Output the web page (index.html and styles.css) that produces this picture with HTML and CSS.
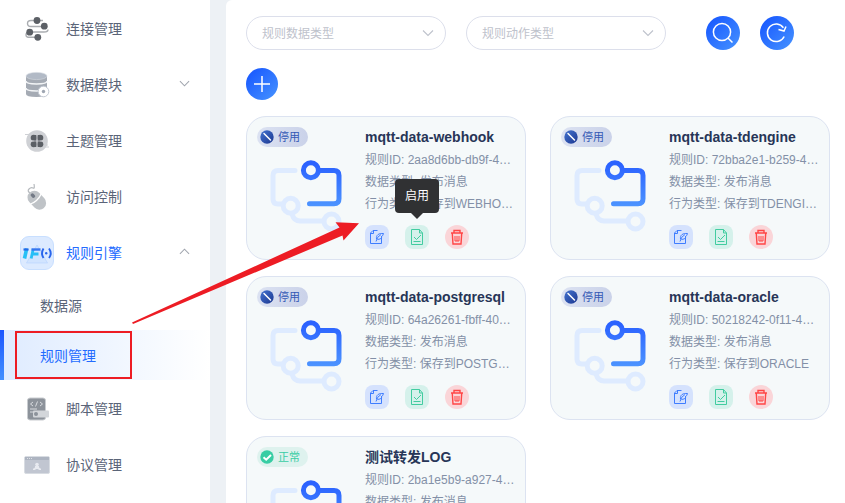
FILE: index.html
```
<!DOCTYPE html>
<html lang="zh-CN">
<head>
<meta charset="utf-8">
<title>规则管理</title>
<link rel="stylesheet" href="styles.css">
</head>
<body>
<svg class="defs" width="0" height="0">
  <defs>
    <linearGradient id="blue" x1="0" y1="0" x2="0" y2="80" gradientUnits="userSpaceOnUse"><stop offset=".1" stop-color="#2b62ff"/><stop offset=".65" stop-color="#4e96ff"/></linearGradient>
    <linearGradient id="navy" x1="0" y1="0" x2="1" y2="1"><stop offset="0" stop-color="#4474d0"/><stop offset="1" stop-color="#1c3790"/></linearGradient>
    <symbol id="flow" viewBox="0 0 80 80">
      <g fill="none" stroke-width="5" stroke-linecap="round">
        <path stroke="#deebff" d="M29 14.500H12q-5 0-5 5V43q0 5 5 5h4M26 58q2 7 8 7H57"/>
        <circle cx="24.700" cy="49.700" r="7.500" stroke="#deebff"/>
        <circle cx="65.500" cy="65.500" r="7.500" stroke="#deebff"/>
        <path stroke="url(#blue)" d="M53 14.500H68q5 0 5 5V42.700q0 5-5 5H43.500"/>
        <circle cx="44.900" cy="14.300" r="7.500" stroke="url(#blue)"/>
      </g>
    </symbol>
    <symbol id="stop" viewBox="0 0 14 14"><circle cx="7" cy="7" r="6.700" fill="url(#navy)"/><path d="M4 3.500 10.500 10" stroke="#fff" stroke-width="1.500" stroke-linecap="round"/></symbol>
    <symbol id="ok" viewBox="0 0 14 14"><circle cx="7" cy="7" r="6.700" fill="#38cda4"/><path d="m3.500 7.200 2.700 2.500L11 5" fill="none" stroke="#fff" stroke-width="2"/></symbol>
    <symbol id="edit" viewBox="0 0 24 24"><g fill="none" stroke="#3e7dff" stroke-width="1"><path d="M12.500 5.500H8L5.500 8v10.500h11v-6M8.500 5.500v3h-3M11 16.500q1-5 5-7M11.500 14c-.5-4 2-5.800 7-5.500q-.5 2.500-2.500 3.500h1q-1 2.500-4.500 2.500"/></g></symbol>
    <symbol id="enable" viewBox="0 0 24 24"><g fill="none" stroke="#42cca0"><path d="M6.500 4.500h8l3 3.500v11.500h-11zM14.500 4.500V8h3M9 12l2.500 2.500 4.500-4.500M8.500 16.500h7"/></g></symbol>
    <symbol id="trash" viewBox="0 0 24 24"><g fill="none" stroke="#ff4545" stroke-width="1.200"><path d="M6 8h12M9 7.500V5.500h6v2M7.300 8.500l.7 10.500h8l.7-10.500" stroke-width="1.400"/><path d="M10 11v5M12 11v5M14 11v5M10 16h4" stroke-width="1"/></g></symbol>
    <symbol id="down" viewBox="0 0 12 12"><path d="m1 3.500 5 5 5-5" fill="none" stroke="currentColor" stroke-width="1.100"/></symbol>
  </defs>
</svg>
<div class="app">
  <nav class="sidebar">
    <a class="item"><svg class="icon" viewBox="0 0 34 34"><path d="M23 8.500H11q-3.500 0-3.500 3T11 14.500h13M9.500 20H24q4 0 4-2.500M9 20.500q-3 0-3 2.500t4 2.300h7" fill="none" stroke="#aaadb1" stroke-width="1.400"/><g fill="#5c6066"><circle cx="17" cy="8.500" r="3.400"/><circle cx="24.300" cy="14.200" r="3.400"/><circle cx="9.700" cy="20.200" r="3.400"/><circle cx="17.800" cy="25.300" r="3.400"/></g></svg><span class="label">连接管理</span></a>
    <a class="item"><svg class="icon" viewBox="0 0 34 34"><path d="M6 8v18q0 3 10.500 3T27 26V8z" fill="#a5abb4"/><path d="M6 13q0 3 10.500 3T27 13M6 20q0 3 10.500 3T27 20" fill="none" stroke="#f2f4f6" stroke-width="1.500"/><ellipse cx="16.500" cy="8" rx="10.500" ry="3.600" fill="#b2bac6" stroke="#d5dae0" stroke-width=".6"/><circle cx="23.500" cy="23.500" r="5.300" fill="#fff" stroke="#c4cad4"/><circle cx="23.500" cy="23.500" r="1.700" fill="#9fa6b2"/></svg><span class="label">数据模块</span><svg class="caret"><use href="#down"/></svg></a>
    <a class="item"><svg class="icon" viewBox="0 0 34 34"><circle cx="17" cy="17" r="10.800" fill="#cfd1d5"/><path d="M5 10.500h8M7 13h5M22 21h6M23 23h6" stroke="#cfd1d5"/><g fill="#5b5f65"><path d="M14 11h2.500v12H14zM17.500 11H20v12h-2.500z"/><circle cx="13.700" cy="13.700" r="3"/><circle cx="20.300" cy="13.700" r="3"/><circle cx="13.700" cy="20.300" r="3"/><circle cx="20.300" cy="20.300" r="3"/></g><path d="M17 10v14M10 17h14" stroke="#cfd1d5" stroke-width=".8"/></svg><span class="label">主题管理</span></a>
    <a class="item"><svg class="icon" viewBox="0 0 34 34"><path d="M10 13q-3-2-1-4t4-1 1-4" fill="none" stroke="#b5b9bd" stroke-width="1.200"/><g transform="rotate(-43 17 20)"><rect x="10" y="9.500" width="13.500" height="21" rx="6.700" fill="#bfc3c7"/><path d="M9.500 18.500q7 3 14.500 0" fill="none" stroke="#fff" stroke-width="1.200"/><rect x="15.300" y="11.500" width="3.400" height="5" rx="1.500" fill="#737a86"/></g></svg><span class="label">访问控制</span></a>
    <a class="item engine"><span class="if-icon"><svg viewBox="0 0 32 32"><path d="M16 8 26.500 26h-21z" fill="#d1e4ff" stroke="#b9d6ff" stroke-width=".7"/><g fill="none"><path d="M5.700 11.500 3.500 21.500" stroke="#26c0f6" stroke-width="3.600"/><path d="M2.500 12.500h5" stroke="#2469e8" stroke-width="2.200"/><path d="M10.200 21.500 12.200 12M11 17h6.500" stroke="#27bff7" stroke-width="2.800"/><path d="M10.500 12.500h9" stroke="#3576ef" stroke-width="2.400"/><path d="M22.500 11.500q-3 5 0 9.500M28 11.500q3.500 5 0 9.500" stroke="#2865ec" stroke-width="1.900"/></g><circle cx="25.200" cy="16.200" r="1.200" fill="#2865ec"/></svg></span><span class="label">规则引擎</span><svg class="caret up"><use href="#down"/></svg></a>
    <div class="submenu"><a class="sub">数据源</a><a class="sub active">规则管理</a></div>
    <a class="item"><svg class="icon" viewBox="0 0 34 34"><rect x="7.500" y="6" width="18" height="22" rx="2.500" fill="#8c929a" stroke="#c9ccd0"/><path d="m13 10-2.500 2 2.500 2M20 10l2.500 2-2.500 2M17.500 9.500l-2 5M10 17h7M10 20h4" fill="none" stroke="#d8dbdf"/><rect x="13" y="18.500" width="16" height="7" rx="1" fill="#d3d6da"/><circle cx="16" cy="22" r="2" fill="#8c929a"/></svg><span class="label">脚本管理</span></a>
    <a class="item"><svg class="icon" viewBox="0 0 34 34"><rect x="4.500" y="8.500" width="25" height="17" rx="1.500" fill="#c1c6d1" stroke="#d8dce2"/><path d="M5 9h24v3H5z" fill="#adb4c1"/><path d="M7 10.500h1M9 10.500h1M11 10.500h1" stroke="#fff" stroke-width=".6"/><path d="M17 16v3M16.500 18l-2.500 3M17.500 18l2.500 3" stroke="#e8eaf0"/><circle cx="17" cy="16.500" r="1.800" fill="#e8eaf0"/><path d="M15 18h4v3h-4zM13 20.500h2.500V22H13zM18.500 20.500H21V22h-2.500z" fill="#e8eaf0"/></svg><span class="label">协议管理</span></a>
  </nav>
  <main class="main">
    <div class="filters">
      <div class="select"><span>规则数据类型</span><svg><use href="#down"/></svg></div>
      <div class="select"><span>规则动作类型</span><svg><use href="#down"/></svg></div>
      <button class="round search"><svg viewBox="0 0 34 34"><circle cx="16" cy="16" r="8.600"/><path d="m22 22 4.500 4.500"/></svg></button>
      <button class="round"><svg viewBox="0 0 34 34"><path d="M24.200 20.500a8.800 8.800 0 1 1-.8-8.800M18.500 13.500l5.500 1.500 2-4.500"/></svg></button>
    </div>
    <button class="round add"><svg viewBox="0 0 32 32"><path d="M16 8v16M8 16h16"/></svg></button>
    <div class="cards">
      <article class="card"><div class="left"><span class="badge"><svg><use href="#stop"/></svg><span>停用</span></span><svg class="flow"><use href="#flow"/></svg></div><div class="info"><h3>mqtt-data-webhook</h3><p>规则ID: 2aa8d6bb-db9f-4…</p><p>数据类型: 发布消息</p><p>行为类型: 保存到WEBHO…</p><div class="actions"><span class="edit"><svg><use href="#edit"/></svg></span><span class="enable"><svg><use href="#enable"/></svg><b class="tooltip">启用</b></span><span class="trash"><svg><use href="#trash"/></svg></span></div></div></article>
      <article class="card"><div class="left"><span class="badge"><svg><use href="#stop"/></svg><span>停用</span></span><svg class="flow"><use href="#flow"/></svg></div><div class="info"><h3>mqtt-data-tdengine</h3><p>规则ID: 72bba2e1-b259-4…</p><p>数据类型: 发布消息</p><p>行为类型: 保存到TDENGI…</p><div class="actions"><span class="edit"><svg><use href="#edit"/></svg></span><span class="enable"><svg><use href="#enable"/></svg></span><span class="trash"><svg><use href="#trash"/></svg></span></div></div></article>
      <article class="card"><div class="left"><span class="badge"><svg><use href="#stop"/></svg><span>停用</span></span><svg class="flow"><use href="#flow"/></svg></div><div class="info"><h3>mqtt-data-postgresql</h3><p>规则ID: 64a26261-fbff-40…</p><p>数据类型: 发布消息</p><p>行为类型: 保存到POSTG…</p><div class="actions"><span class="edit"><svg><use href="#edit"/></svg></span><span class="enable"><svg><use href="#enable"/></svg></span><span class="trash"><svg><use href="#trash"/></svg></span></div></div></article>
      <article class="card"><div class="left"><span class="badge"><svg><use href="#stop"/></svg><span>停用</span></span><svg class="flow"><use href="#flow"/></svg></div><div class="info"><h3>mqtt-data-oracle</h3><p>规则ID: 50218242-0f11-4…</p><p>数据类型: 发布消息</p><p>行为类型: 保存到ORACLE</p><div class="actions"><span class="edit"><svg><use href="#edit"/></svg></span><span class="enable"><svg><use href="#enable"/></svg></span><span class="trash"><svg><use href="#trash"/></svg></span></div></div></article>
      <article class="card"><div class="left"><span class="badge normal"><svg><use href="#ok"/></svg><span>正常</span></span><svg class="flow"><use href="#flow"/></svg></div><div class="info"><h3>测试转发LOG</h3><p>规则ID: 2ba1e5b9-a927-4…</p><p>数据类型: 发布消息</p></div></article>
    </div>
  </main>
</div>
<svg class="annotation" viewBox="0 0 845 503"><rect x="16" y="332" width="115" height="46" fill="none" stroke="#ed1c24" stroke-width="2"/><path d="M132 322.500 339.500 227.500 335.500 222.300 359 223.300 343.500 240.500 342.500 235.500 133 324Z" fill="#ed1c24"/></svg>
</body>
</html>
```
FILE: styles.css
```
* { box-sizing: border-box; }
body { margin: 0; height: 503px; overflow: hidden; font-family: "Liberation Sans", "Noto Sans CJK SC", sans-serif; color: #5a6478; }
svg { display: block; }
.defs { position: absolute; }
.app { display: flex; height: 503px; overflow: hidden; background: #edf1f5; }
.sidebar { width: 210px; background: #fff; padding-top: 1px; flex: none; }
.item { display: flex; align-items: center; height: 56px; padding: 0 20px; font-size: 14px; }
.item .icon { width: 34px; height: 34px; margin-right: 12px; }
.label { margin-top: -2px; }
.if-icon { width: 34px; height: 34px; margin-right: 12px; border: 1px solid #c8dfff; border-radius: 9px; background: #dceaff; }
.caret { width: 11px; height: 11px; margin: -4px 0 0 auto; color: #a0a5ae; }
.caret.up { transform: rotate(180deg); }
.engine { color: #236bff; }
.sub { display: flex; align-items: center; height: 50px; padding-left: 40px; font-size: 14px; }
.submenu { margin: -1px 0 1px; }
.sub.active { position: relative; color: #236bff; background: linear-gradient(90deg, #deebff, #fff); }
.sub.active::before { content: ""; position: absolute; left: 0; top: 0; width: 4px; height: 50px; background: linear-gradient(#1a55ff, #4290ff); }
.main { flex: 1; height: 503px; overflow: hidden; margin-left: 16px; padding: 16px 0 0 20px; background: #fff; border-top-left-radius: 6px; }
.filters { display: flex; gap: 20px; }
.select { display: flex; align-items: center; justify-content: space-between; width: 200px; height: 34px; padding: 0 11px 0 15px; border: 1px solid #dcdfeb; border-radius: 17px; color: #bec2cc; font-size: 12px; }
.select span { margin-top: -2px; }
.select svg { width: 12px; height: 12px; }
.round { display: block; width: 34px; height: 34px; padding: 0; border: 0; border-radius: 50%; background: linear-gradient(135deg, #1453ff, #4794ff); }
.round svg { width: 100%; height: 100%; fill: none; stroke: #fff; stroke-width: 1.5; }
.search { margin-left: 20px; }
.round.add { width: 32px; height: 32px; margin-top: 18px; }
.cards { display: grid; grid-template-columns: 280px 280px; gap: 16px 24px; margin-top: 16px; }
.card { display: flex; height: 144px; padding: 10px; border: 1px solid #dce3f1; border-radius: 20px; background: #f5f9fa; }
.left { width: 108px; flex: none; }
.badge { display: flex; align-items: center; gap: 4px; width: 51px; height: 20px; padding-left: 3px; border-radius: 10px; background: linear-gradient(90deg, #dce2f2, #cad2e9); color: #3358b5; font-size: 11px; }
.badge span { margin-top: -2px; }
.badge svg { width: 14px; height: 14px; }
.badge.normal { background: #def2ee; color: #3acda5; }
.flow { width: 80px; height: 80px; margin: 9px 0 0 9px; }
h3 { margin: 0; font-size: 14px; line-height: 20px; font-weight: 700; color: #273557; }
.info p { margin: 0; font-size: 12px; line-height: 22px; color: #8390a7; white-space: nowrap; }
.info h3 { height: 22px; }
.actions { display: flex; gap: 16px; margin-top: 10px; }
.actions > span { position: relative; width: 24px; height: 24px; border-radius: 8px; }
.actions svg { width: 24px; height: 24px; }
.edit { background: #d5e2fd; }
.enable { background: #d5f1eb; }
.actions .trash { background: #fad5d8; border-radius: 50%; }
.tooltip { position: absolute; left: -10px; top: -46px; width: 44px; height: 34px; border-radius: 4px; background: #303133; color: #fff; font-size: 12px; font-weight: 400; line-height: 34px; text-align: center; }
.tooltip::after { content: ""; position: absolute; left: 16px; top: 34px; border: 6px solid transparent; border-top-color: #303133; border-bottom: 0; }
.annotation { position: absolute; left: 0; top: 0; width: 845px; height: 503px; pointer-events: none; }
```
